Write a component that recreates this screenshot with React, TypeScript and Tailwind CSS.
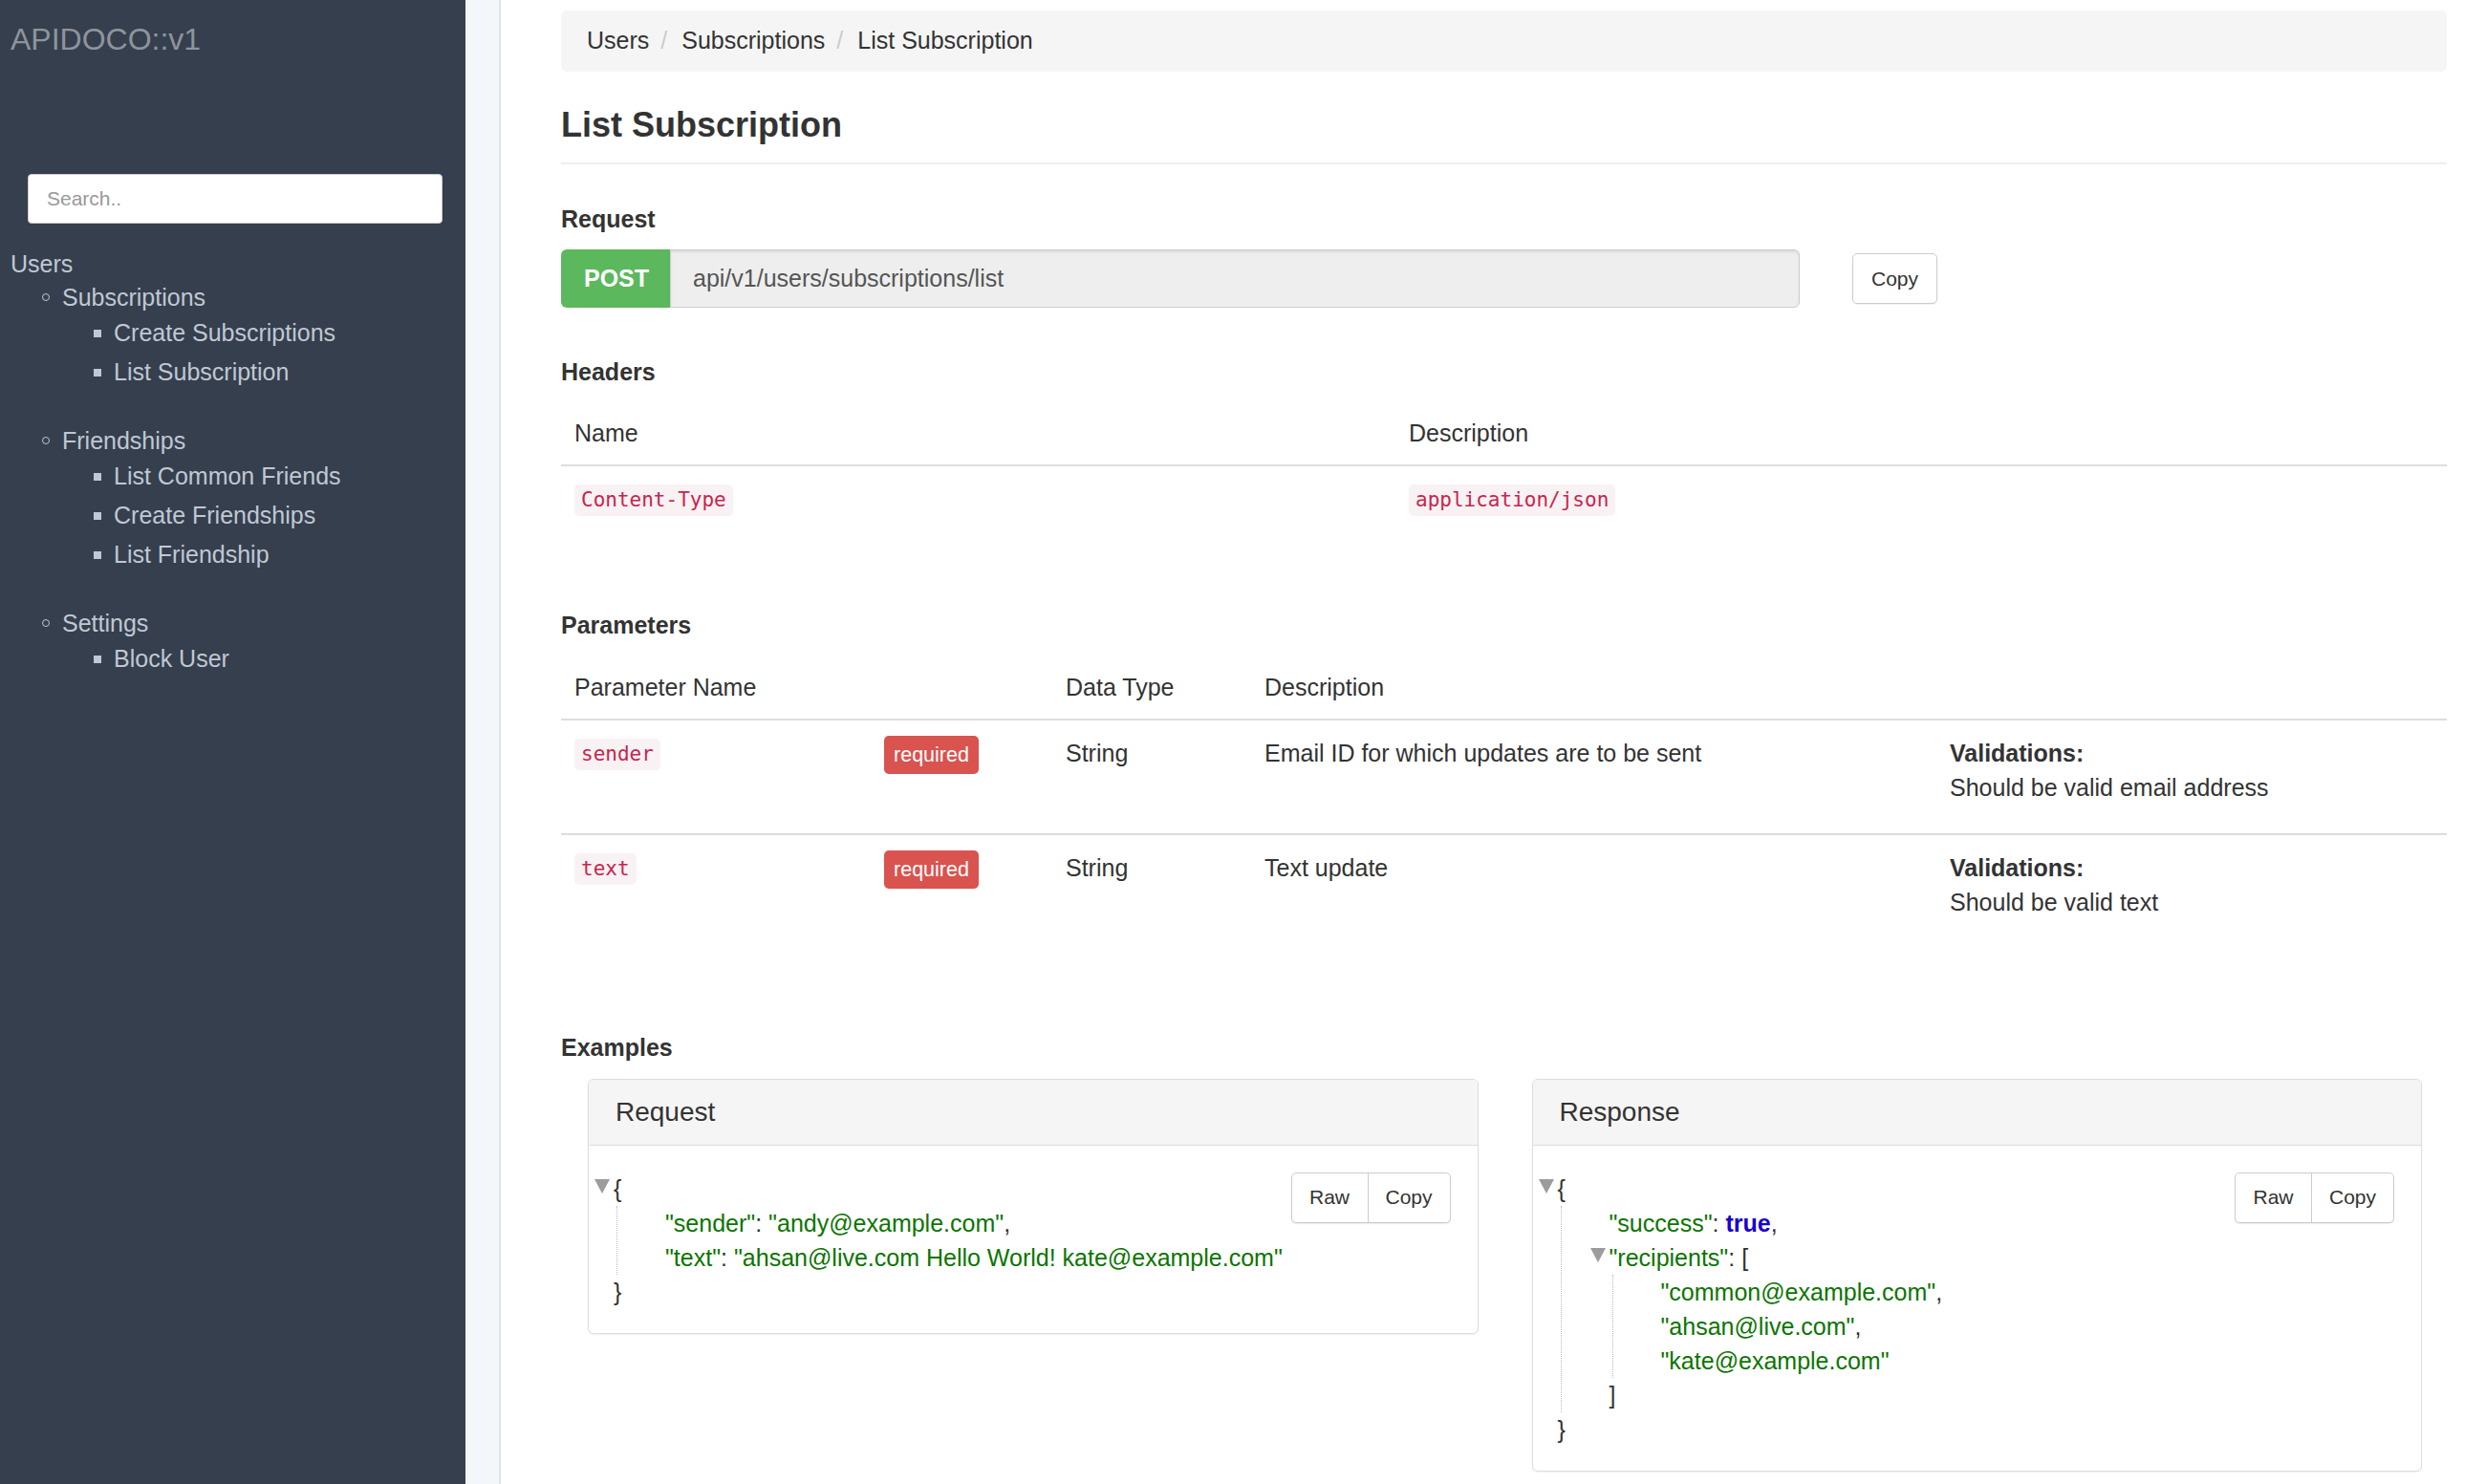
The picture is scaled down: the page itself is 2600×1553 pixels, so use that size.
import React from "react";

const navGroups = [
  { title: "Subscriptions", items: ["Create Subscriptions", "List Subscription"] },
  { title: "Friendships", items: ["List Common Friends", "Create Friendships", "List Friendship"] },
  { title: "Settings", items: ["Block User"] },
];

function Sidebar() {
  return (
    <aside className="w-[487px] shrink-0 bg-[#353f4e] font-['Liberation_Sans',Arial,sans-serif]">
      <div className="pl-[11px] mt-[23px] text-[32px] leading-[36px] text-[#8e949c]">APIDOCO::v1</div>

      <div className="ml-[29px] mt-[123px] w-[434px] h-[52px] bg-white rounded-[4px] border border-[#ccc] flex items-center pl-[19px]">
        <input
          placeholder="Search.."
          className="w-full bg-transparent outline-none text-[21px] text-[#555] placeholder:text-[#999]"
        />
      </div>

      <nav className="mt-[24px] text-[25px] text-[#c0c8d3]">
        <div className="pl-[11px] h-[36px] leading-[36px]">Users</div>
        {navGroups.map((group) => (
          <div key={group.title} className="mb-[34px]">
            <div className="h-[34px] flex items-center pl-[44px]">
              <span className="w-[8px] h-[8px] rounded-full border border-[#c0c8d3]" />
              <span className="ml-[13px] leading-[34px]">{group.title}</span>
            </div>
            {group.items.map((item) => (
              <div key={item} className="h-[41px] flex items-center pl-[98px]">
                <span className="w-[8px] h-[8px] bg-[#c0c8d3]" />
                <span className="ml-[13px] leading-[41px]">{item}</span>
              </div>
            ))}
          </div>
        ))}
      </nav>
    </aside>
  );
}

function Code({ children }: { children: React.ReactNode }) {
  return (
    <span className="inline-block px-[7px] py-[2px] leading-[29px] rounded-[5px] bg-[#f9f2f4] text-[#c7254e] text-[21px] font-['DejaVu_Sans_Mono',monospace]">
      {children}
    </span>
  );
}

function Required() {
  return (
    <span className="inline-flex items-center justify-center w-[99px] h-[40px] rounded-[5px] bg-[#d9534f] text-white text-[21.5px]">
      required
    </span>
  );
}

function Tri({ className }: { className: string }) {
  return (
    <svg className={className} width="18" height="17" viewBox="0 0 18 17">
      <polygon points="1,1 17,1 9,16" fill="#9c9c9c" />
    </svg>
  );
}

function Str({ children }: { children: React.ReactNode }) {
  return <span className="text-[#0b7500]">{children}</span>;
}

function ButtonGroup() {
  return (
    <div className="absolute top-[28px] right-[28px] flex h-[53px] border border-[#ccc] rounded-[5px] bg-white text-[21px] text-[#333] shadow-[0_1px_1px_rgba(0,0,0,0.08)]">
      <span className="w-[79px] flex items-center justify-center">Raw</span>
      <span className="w-[86px] flex items-center justify-center border-l border-[#ccc]">Copy</span>
    </div>
  );
}

function Panel({ title, children }: { title: string; children: React.ReactNode }) {
  return (
    <div className="border border-[#ddd] rounded-[6px] bg-white shadow-[0_1px_2px_rgba(0,0,0,0.06)] overflow-hidden">
      <div className="h-[69px] bg-[#f5f5f5] border-b border-[#ddd] flex items-center pl-[28px] text-[28px] text-[#333]">
        {title}
      </div>
      <div className="relative pl-[26px] pr-[26px] pt-[27px] pb-[25px] text-[25px] leading-[36px] text-[#333]">
        <ButtonGroup />
        {children}
      </div>
    </div>
  );
}

export default function App() {
  return (
    <div className="flex w-full h-[1553px] overflow-hidden bg-white font-['Liberation_Sans',Arial,sans-serif] text-[#333]">
      <Sidebar />
      <div className="w-[37px] shrink-0 bg-[#f4f7fa] border-r-2 border-[#e1e4e7]" />

      <main className="flex-1 pl-[63px] pr-[40px]">
        {/* Breadcrumb */}
        <div className="mt-[11px] h-[64px] rounded-[6px] bg-[#f5f5f5] flex items-center pl-[27px] text-[25px] text-[#333]">
          <span>Users</span>
          <span className="ml-[12px] mr-[15px] text-[#ccc]">/</span>
          <span>Subscriptions</span>
          <span className="ml-[12px] mr-[15px] text-[#ccc]">/</span>
          <span>List Subscription</span>
        </div>

        <h1 className="mt-[36px] text-[36px] leading-[40px] font-bold">List Subscription</h1>
        <div className="mt-[19px] h-[2px] bg-[#eee]" />

        {/* Request */}
        <div className="mt-[42px] text-[25px] leading-[30px] font-bold">Request</div>
        <div className="mt-[17px] flex items-center">
          <div className="h-[61px] w-[114px] rounded-l-[6px] bg-[#5cb85c] text-white font-bold text-[25px] flex items-center pl-[24px]">
            POST
          </div>
          <div className="h-[61px] w-[1182px] rounded-r-[6px] bg-[#eee] border border-[#ccc] shadow-[inset_0_2px_2px_rgba(0,0,0,0.08)] flex items-center pl-[23px] text-[25px] text-[#555]">
            api/v1/users/subscriptions/list
          </div>
          <div className="ml-[55px] w-[89px] h-[53px] border border-[#ccc] rounded-[5px] flex items-center justify-center text-[21px] text-[#333] shadow-[0_1px_1px_rgba(0,0,0,0.06)]">
            Copy
          </div>
        </div>

        {/* Headers */}
        <div className="mt-[52px] text-[25px] leading-[30px] font-bold">Headers</div>
        <div className="mt-[31px] text-[25px]">
          <div className="grid grid-cols-[873px_1fr] border-b-2 border-[#ddd]">
            <div className="px-[14px] pb-[15px] leading-[36px]">Name</div>
            <div className="px-[14px] pb-[15px] leading-[36px]">Description</div>
          </div>
          <div className="grid grid-cols-[873px_1fr] py-[15px]">
            <div className="px-[14px]">
              <Code>Content-Type</Code>
            </div>
            <div className="px-[14px]">
              <Code>application/json</Code>
            </div>
          </div>
        </div>

        {/* Parameters */}
        <div className="mt-[83px] text-[25px] leading-[30px] font-bold">Parameters</div>
        <div className="mt-[32px] text-[25px] leading-[36px]">
          <div className="grid grid-cols-[324px_190px_208px_717px_1fr] border-b-2 border-[#ddd]">
            <div className="px-[14px] pb-[15px]">Parameter Name</div>
            <div className="px-[14px] pb-[15px]" />
            <div className="px-[14px] pb-[15px]">Data Type</div>
            <div className="px-[14px] pb-[15px]">Description</div>
            <div className="px-[14px] pb-[15px]" />
          </div>
          {[
            { name: "sender", desc: "Email ID for which updates are to be sent", rule: "Should be valid email address" },
            { name: "text", desc: "Text update", rule: "Should be valid text" },
          ].map((p, i) => (
            <div
              key={p.name}
              className={`grid grid-cols-[324px_190px_208px_717px_1fr] pt-[16px] pb-[30px] ${
                i === 0 ? "border-b-2 border-[#ddd]" : ""
              }`}
            >
              <div className="px-[14px] pt-[3px] leading-[0]">
                <Code>{p.name}</Code>
              </div>
              <div className="px-[14px] leading-[0]">
                <Required />
              </div>
              <div className="px-[14px]">String</div>
              <div className="px-[14px]">{p.desc}</div>
              <div className="px-[14px]">
                <div className="font-bold">Validations:</div>
                <div>{p.rule}</div>
              </div>
            </div>
          ))}
        </div>

        {/* Examples */}
        <div className="mt-[89px] text-[25px] leading-[30px] font-bold">Examples</div>
        <div className="mt-[18px] grid grid-cols-2 items-start gap-[56px] pl-[28px] pr-[26px]">
          <Panel title="Request">
            <div className="relative">
              <Tri className="absolute left-[-21px] top-[7px]" />
              <span>{"{"}</span>
            </div>
            <div className="ml-[3px] border-l border-dotted border-[#bbb] pl-[50px]">
              <div>
                <Str>"sender"</Str>: <Str>"andy@example.com"</Str>,
              </div>
              <div>
                <Str>"text"</Str>: <Str>"ahsan@live.com Hello World! kate@example.com"</Str>
              </div>
            </div>
            <div>{"}"}</div>
          </Panel>

          <Panel title="Response">
            <div className="relative">
              <Tri className="absolute left-[-21px] top-[7px]" />
              <span>{"{"}</span>
            </div>
            <div className="ml-[3px] border-l border-dotted border-[#bbb] pl-[50px]">
              <div>
                <Str>"success"</Str>: <span className="font-bold text-[#1a01cc]">true</span>,
              </div>
              <div className="relative">
                <Tri className="absolute left-[-21px] top-[7px]" />
                <Str>"recipients"</Str>: [
              </div>
              <div className="ml-[3px] border-l border-dotted border-[#bbb] pl-[50px]">
                <div>
                  <Str>"common@example.com"</Str>,
                </div>
                <div>
                  <Str>"ahsan@live.com"</Str>,
                </div>
                <div>
                  <Str>"kate@example.com"</Str>
                </div>
              </div>
              <div>]</div>
            </div>
            <div>{"}"}</div>
          </Panel>
        </div>
      </main>
    </div>
  );
}
